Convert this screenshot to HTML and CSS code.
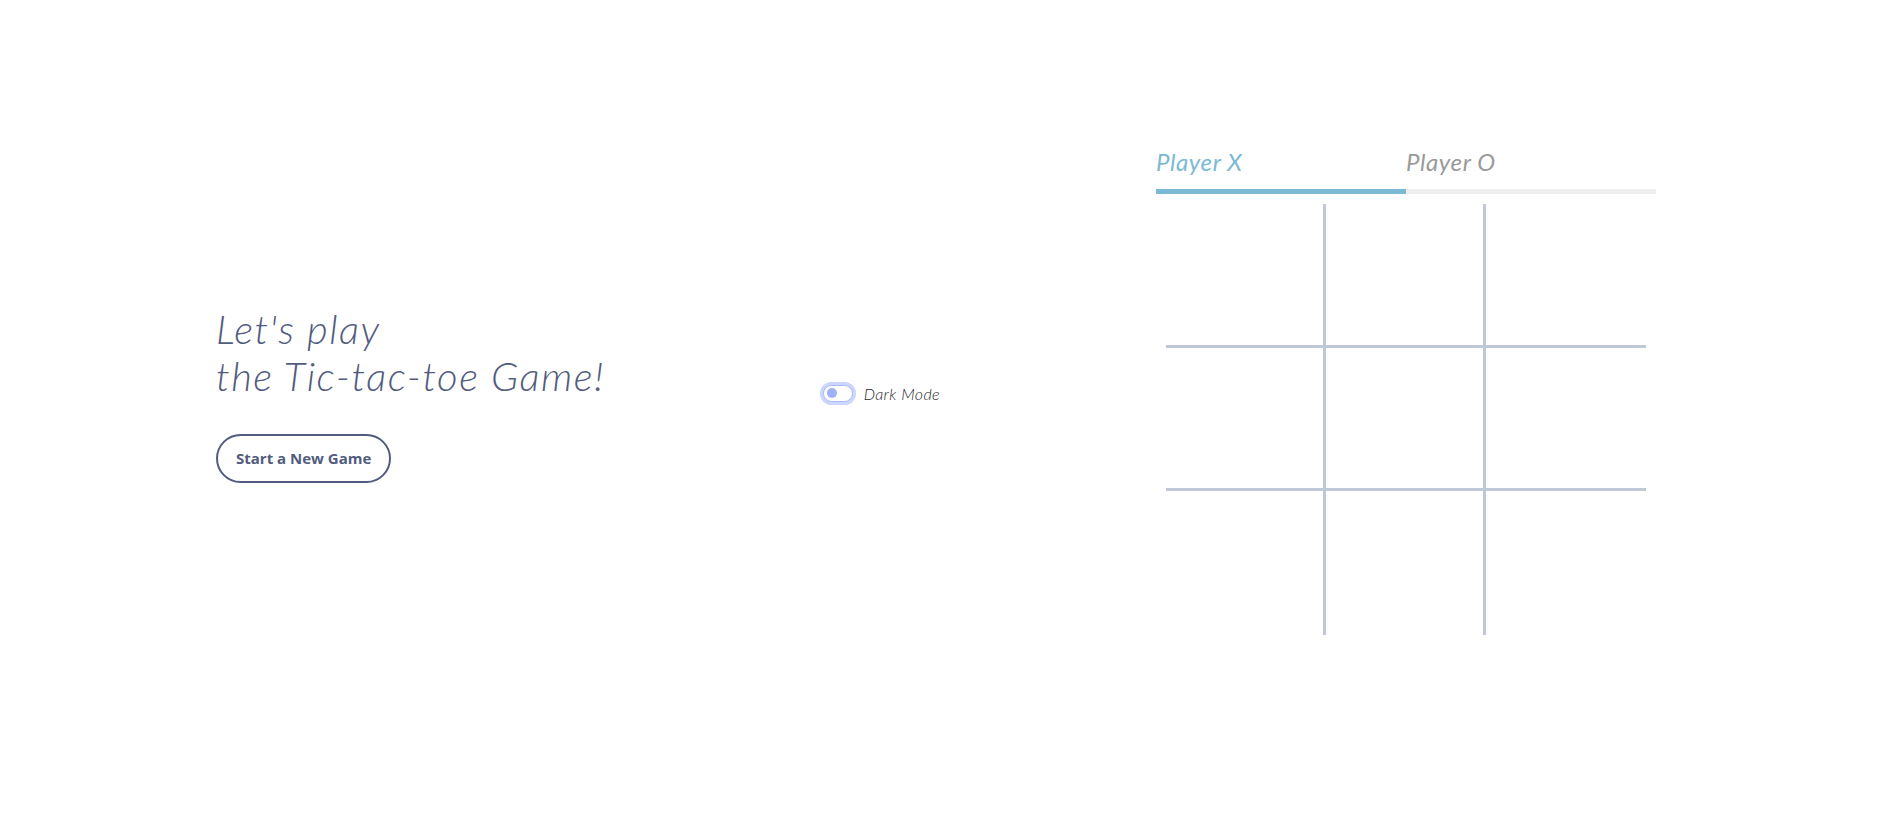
FILE: index.html
```html
<!DOCTYPE html>
<html lang="en">
<head>
<meta charset="utf-8">
<title>Tic-tac-toe</title>
<link rel="stylesheet" href="styles.css">
</head>
<body>
<main class="page">
  <section class="intro">
    <h1 class="title">Let's play<br>the Tic-tac-toe Game!</h1>
    <button class="btn-new" type="button">Start a New Game</button>
  </section>
  <section class="mode">
    <label class="switch">
      <span class="switch-track"><span class="switch-knob"></span></span>
      <span class="switch-label">Dark Mode</span>
    </label>
  </section>
  <section class="game">
    <div class="tabs">
      <div class="tab tab-active">Player X</div>
      <div class="tab">Player O</div>
    </div>
    <div class="board">
      <div class="cell"></div><div class="cell"></div><div class="cell"></div>
      <div class="cell"></div><div class="cell"></div><div class="cell"></div>
      <div class="cell"></div><div class="cell"></div><div class="cell"></div>
    </div>
  </section>
</main>
</body>
</html>
```

FILE: styles.css
```css
* { box-sizing: border-box; }

html, body {
  margin: 0;
  padding: 0;
  background: #ffffff;
}

.page {
  height: 789px;
  display: flex;
  align-items: center;
  justify-content: space-between;
  padding: 0 221px 0 216px;
  font-family: "Lato", "Open Sans", sans-serif;
}

.intro {
  width: 391px;
  display: flex;
  flex-direction: column;
  align-items: flex-start;
}

.title {
  margin: 0;
  font-family: "Lato", sans-serif;
  font-style: italic;
  font-weight: 300;
  font-size: 40px;
  line-height: 47px;
  letter-spacing: 1.5px;
  color: #525c7e;
  white-space: nowrap;
}

.btn-new {
  margin-top: 34px;
  height: 49px;
  padding: 0 18px;
  border: 2px solid #525c7e;
  border-radius: 25px;
  background: #ffffff;
  color: #525c7e;
  font-family: "Open Sans", "Noto Sans", sans-serif;
  font-weight: 700;
  font-size: 15px;
  line-height: 23px;
}

.mode {
  width: 117px;
  margin-bottom: 3px;
}

.switch {
  display: flex;
  align-items: center;
  gap: 11px;
}

.switch-track {
  width: 30px;
  height: 17px;
  border: 1px solid #a9b8f7;
  border-radius: 9px;
  background: #ffffff;
  box-shadow: 0 0 0 3px #ccd6fc;
  display: flex;
  align-items: center;
  padding-left: 3px;
}

.switch-knob {
  width: 10px;
  height: 10px;
  border-radius: 50%;
  background: #9eb0f6;
}

.switch-label {
  font-family: "Lato", sans-serif;
  font-style: italic;
  font-weight: 300;
  font-size: 16px;
  letter-spacing: 0.4px;
  color: #1f1f2e;
  white-space: nowrap;
}

.game {
  width: 500px;
  margin-bottom: 6px;
}

.tabs {
  display: flex;
}

.tab {
  flex: 1;
  font-family: "Lato", sans-serif;
  font-style: italic;
  font-weight: 400;
  font-size: 24px;
  line-height: 28px;
  letter-spacing: 0.6px;
  color: #9a9a9a;
  padding-bottom: 13px;
  border-bottom: 5px solid #eeeeee;
}

.tab-active {
  color: #7bbad5;
  border-bottom-color: #7bbad5;
}

.board {
  margin: 10px 10px 0;
  height: 431px;
  display: grid;
  grid-template-columns: repeat(3, 1fr);
  grid-template-rows: repeat(3, 1fr);
}

.cell {
  border-color: #c0c8d7;
  border-style: solid;
  border-width: 0;
}

.cell:nth-child(3n+1),
.cell:nth-child(3n+2) {
  border-right-width: 3px;
}

.cell:nth-child(-n+6) {
  border-bottom-width: 3px;
}
```
